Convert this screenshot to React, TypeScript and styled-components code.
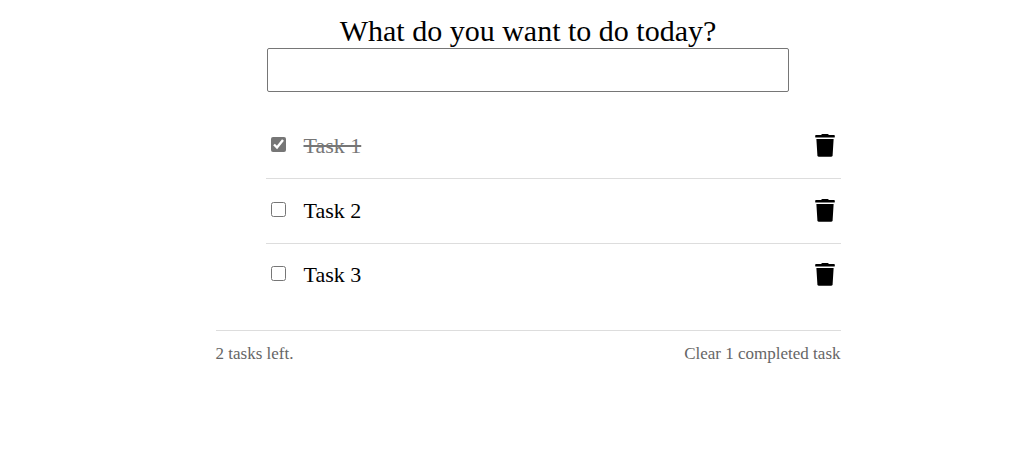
import React, { useState } from "react";
import styled, { createGlobalStyle } from "styled-components";

const GlobalStyle = createGlobalStyle`
  *, *::before, *::after { box-sizing: border-box; }
  body {
    margin: 0;
    background: #fff;
    color: #000;
    font-family: "Liberation Serif", "Times New Roman", serif;
  }
`;

const Page = styled.main`
  display: flex;
  justify-content: center;
  padding: 14px 0 16px 43px;
`;

const Card = styled.div`
  width: 100%;
  max-width: 625px;
`;

const NewTask = styled.form`
  display: flex;
  flex-direction: column;
  align-items: center;
`;

const Title = styled.label`
  font-size: 30px;
  line-height: 34px;
`;

const TaskInput = styled.input`
  width: 100%;
  max-width: 522px;
  height: 44px;
  padding: 4px 8px;
  border: 1px solid #767676;
  border-radius: 2px;
  background: #fff;
  font: inherit;
  font-size: 22px;
`;

const TaskList = styled.ul`
  margin: 22px 0 0;
  padding: 0 0 24px 50px;
  border-bottom: 1px solid #ddd;
  list-style: none;
`;

const TaskRow = styled.li`
  display: flex;
  align-items: center;
  justify-content: space-between;
  height: 62px;
  padding: 0 5px;

  &:not(:last-child) {
    height: 65px;
    border-bottom: 1px solid #ddd;
  }
`;

const TaskLabel = styled.label<{ $done: boolean }>`
  display: flex;
  align-items: center;
  gap: 18px;
  font-size: 22px;
  line-height: 28px;
  color: ${({ $done }) => ($done ? "#767676" : "#000")};

  span {
    text-decoration: ${({ $done }) => ($done ? "line-through" : "none")};
  }
`;

const Checkbox = styled.input`
  width: 15px;
  height: 15px;
  margin: 0 0 4px;
  accent-color: #767676;
`;

const IconButton = styled.button`
  display: flex;
  padding: 0;
  border: 0;
  background: none;
  color: #000;
  cursor: pointer;
`;

const Footer = styled.footer`
  display: flex;
  justify-content: space-between;
  padding-top: 13px;
  font-size: 17px;
  line-height: 20px;
  color: #666;
`;

const ClearButton = styled.button`
  padding: 0;
  border: 0;
  background: none;
  color: inherit;
  font: inherit;
  cursor: pointer;
`;

const TrashIcon = () => (
  <svg width="21" height="24" viewBox="0 0 21 24" fill="currentColor" aria-hidden="true">
    <path d="M6.3 0.7Q6.7 0 7.4 0H12.6Q13.3 0 13.7 0.7L14 1H19Q19.8 1 19.8 1.7V2.9Q19.8 3.5 19 3.5H1Q0.2 3.5 0.2 2.9V1.7Q0.2 1 1 1H6Z" />
    <path d="M1.4 5.1H18.6L17.6 21.2Q17.5 22.8 15.9 22.8H4.1Q2.5 22.8 2.4 21.2Z" />
  </svg>
);

const plural = (count: number) => (count === 1 ? "task" : "tasks");

export default function App() {
  const [draft, setDraft] = useState("");
  const [tasks, setTasks] = useState([
    { id: 1, name: "Task 1", done: true },
    { id: 2, name: "Task 2", done: false },
    { id: 3, name: "Task 3", done: false },
  ]);
  const completed = tasks.filter((t) => t.done).length;
  const left = tasks.length - completed;

  const addTask = (event: React.FormEvent) => {
    event.preventDefault();
    const name = draft.trim();
    if (!name) return;
    setTasks([...tasks, { id: Date.now(), name, done: false }]);
    setDraft("");
  };

  return (
    <>
      <GlobalStyle />
      <Page>
        <Card>
          <NewTask onSubmit={addTask}>
            <Title htmlFor="new-task">What do you want to do today?</Title>
            <TaskInput
              id="new-task"
              type="text"
              autoComplete="off"
              value={draft}
              onChange={(e) => setDraft(e.target.value)}
            />
          </NewTask>
          <TaskList>
            {tasks.map((task) => (
              <TaskRow key={task.id}>
                <TaskLabel $done={task.done}>
                  <Checkbox
                    type="checkbox"
                    checked={task.done}
                    onChange={() =>
                      setTasks(tasks.map((t) => (t.id === task.id ? { ...t, done: !t.done } : t)))
                    }
                  />
                  <span>{task.name}</span>
                </TaskLabel>
                <IconButton
                  type="button"
                  aria-label={`Delete ${task.name}`}
                  onClick={() => setTasks(tasks.filter((t) => t.id !== task.id))}
                >
                  <TrashIcon />
                </IconButton>
              </TaskRow>
            ))}
          </TaskList>
          <Footer>
            <span>
              {left} {plural(left)} left.
            </span>
            {completed > 0 && (
              <ClearButton type="button" onClick={() => setTasks(tasks.filter((t) => !t.done))}>
                Clear {completed} completed {plural(completed)}
              </ClearButton>
            )}
          </Footer>
        </Card>
      </Page>
    </>
  );
}
